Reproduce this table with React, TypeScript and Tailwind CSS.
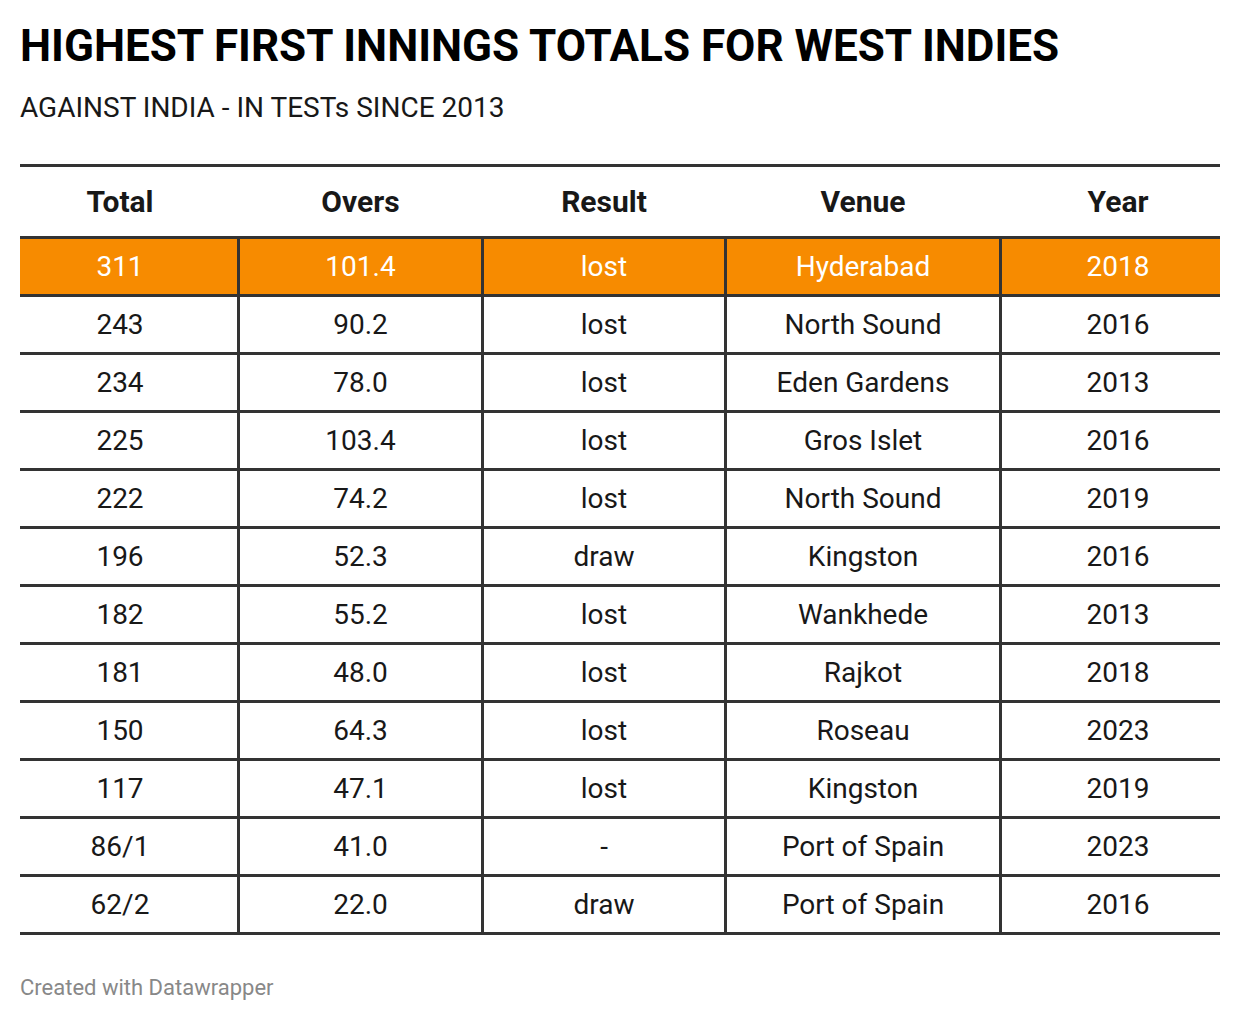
import React from 'react';

const rows = [
  ['311', '101.4', 'lost', 'Hyderabad', '2018'],
  ['243', '90.2', 'lost', 'North Sound', '2016'],
  ['234', '78.0', 'lost', 'Eden Gardens', '2013'],
  ['225', '103.4', 'lost', 'Gros Islet', '2016'],
  ['222', '74.2', 'lost', 'North Sound', '2019'],
  ['196', '52.3', 'draw', 'Kingston', '2016'],
  ['182', '55.2', 'lost', 'Wankhede', '2013'],
  ['181', '48.0', 'lost', 'Rajkot', '2018'],
  ['150', '64.3', 'lost', 'Roseau', '2023'],
  ['117', '47.1', 'lost', 'Kingston', '2019'],
  ['86/1', '41.0', '-', 'Port of Spain', '2023'],
  ['62/2', '22.0', 'draw', 'Port of Spain', '2016'],
];

const headers = ['Total', 'Overs', 'Result', 'Venue', 'Year'];

// widths include the 3px right border where there is one
const colClass = [
  'w-[220px] pr-[17px] border-r-[3px]',
  'w-[244px] border-r-[3px]',
  'w-[243px] border-r-[3px]',
  'w-[275px] border-r-[3px]',
  'flex-1 pl-[14px]',
];

const headClass = [
  'w-[220px] pr-[20px]',
  'w-[244px] pr-[3px]',
  'w-[243px] pr-[3px]',
  'w-[275px] pr-[3px]',
  'flex-1 pl-[14px]',
];

export default function App() {
  return (
    <div
      className="w-[1240px] h-[1020px] bg-white px-5 pt-[21px]"
      style={{ fontFamily: 'Roboto, "Liberation Sans", sans-serif' }}
    >
      <h1 className="text-[44px] leading-[50px] font-bold text-black">
        HIGHEST FIRST INNINGS TOTALS FOR WEST INDIES
      </h1>
      <p className="mt-[21px] text-[28px] leading-[32px] text-[#181818]">
        AGAINST INDIA - IN TESTs SINCE 2013
      </p>

      <div className="mt-[40px] border-t-[3px] border-[#333]">
        <div className="flex h-[72px] items-center border-b-[3px] border-[#333]">
          {headers.map((h, i) => (
            <div
              key={h}
              className={`${headClass[i]} text-center text-[30px] font-bold text-[#181818]`}
            >
              {h}
            </div>
          ))}
        </div>
        {rows.map((row, idx) => (
          <div
            key={idx}
            className={`flex h-[58px] border-b-[3px] border-[#333] ${
              idx === 0 ? 'bg-[#f78b00] text-white' : 'text-[#181818]'
            }`}
          >
            {row.map((cell, i) => (
              <div
                key={i}
                className={`${colClass[i]} border-[#333] flex items-center justify-center text-[28px]`}
              >
                {cell}
              </div>
            ))}
          </div>
        ))}
      </div>

      <p className="mt-[40px] text-[22px] leading-[26px] text-[#888]">Created with Datawrapper</p>
    </div>
  );
}
